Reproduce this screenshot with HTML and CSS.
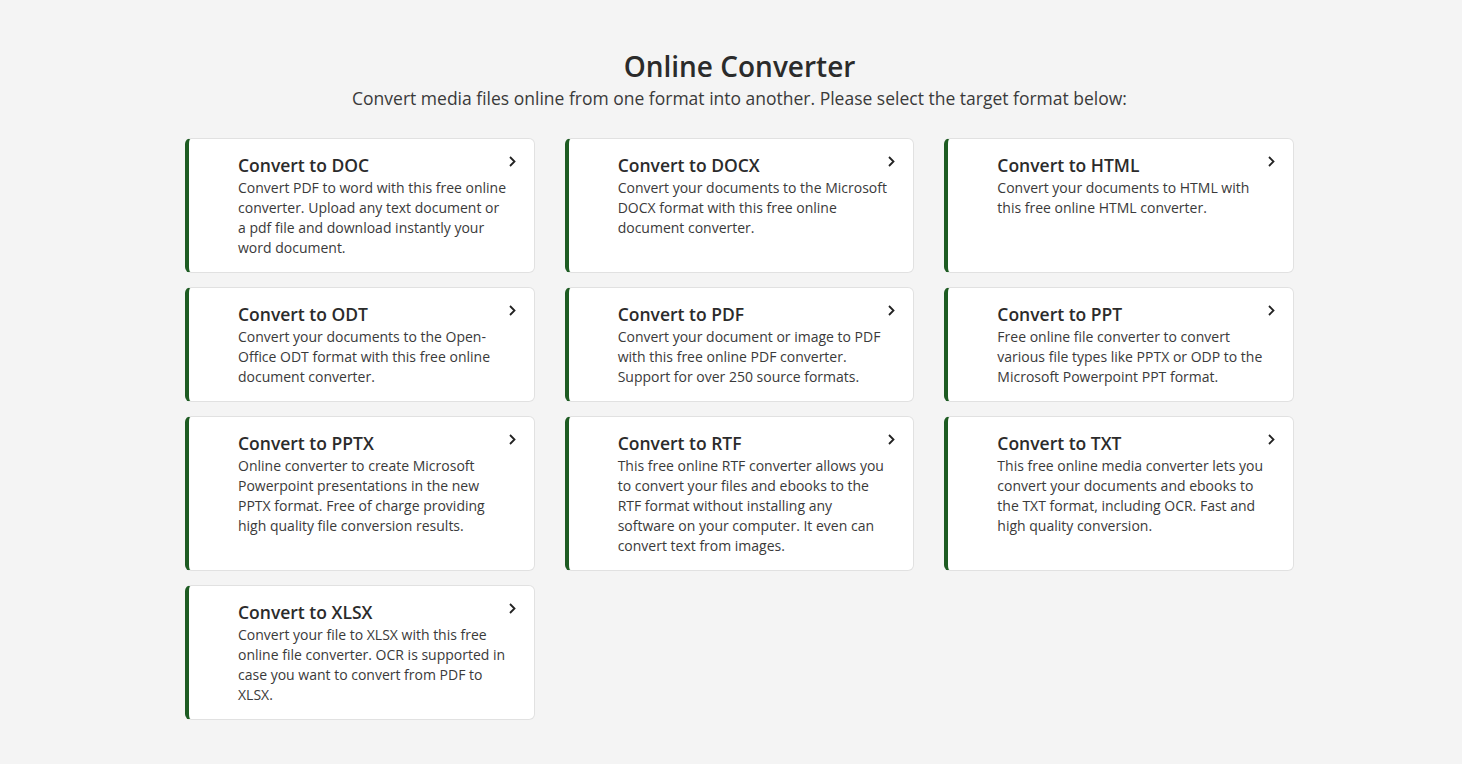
FILE: index.html
```html
<!DOCTYPE html>
<html lang="en">
<head>
  <meta charset="UTF-8" />
  <meta name="viewport" content="width=device-width, initial-scale=1.0"/>
  <title>Online Converter</title>
  <link rel="stylesheet" href="styles.css">
</head>
<body>

  <div class="wrap">
    <h1>Online Converter</h1>
    <p class="lead">Convert media files online from one format into another. Please select the target format below:</p>

    <div class="grid">
      <a class="card" href="#">
        <h3>Convert to DOC</h3>
        <p>Convert PDF to word with this free online converter. Upload any text document or a pdf file and download instantly your word document.</p>
        <svg class="chev" viewBox="0 0 7 11"><path d="M1 1l4.5 4.5L1 10"/></svg>
      </a>
      <a class="card" href="#">
        <h3>Convert to DOCX</h3>
        <p>Convert your documents to the Microsoft DOCX format with this free online document converter.</p>
        <svg class="chev" viewBox="0 0 7 11"><path d="M1 1l4.5 4.5L1 10"/></svg>
      </a>
      <a class="card" href="#">
        <h3>Convert to HTML</h3>
        <p>Convert your documents to HTML with this free online HTML converter.</p>
        <svg class="chev" viewBox="0 0 7 11"><path d="M1 1l4.5 4.5L1 10"/></svg>
      </a>
      <a class="card" href="#">
        <h3>Convert to ODT</h3>
        <p>Convert your documents to the Open-Office ODT format with this free online document converter.</p>
        <svg class="chev" viewBox="0 0 7 11"><path d="M1 1l4.5 4.5L1 10"/></svg>
      </a>
      <a class="card" href="#">
        <h3>Convert to PDF</h3>
        <p>Convert your document or image to PDF with this free online PDF converter. Support for over 250 source formats.</p>
        <svg class="chev" viewBox="0 0 7 11"><path d="M1 1l4.5 4.5L1 10"/></svg>
      </a>
      <a class="card" href="#">
        <h3>Convert to PPT</h3>
        <p>Free online file converter to convert various file types like PPTX or ODP to the Microsoft Powerpoint PPT format.</p>
        <svg class="chev" viewBox="0 0 7 11"><path d="M1 1l4.5 4.5L1 10"/></svg>
      </a>
      <a class="card" href="#">
        <h3>Convert to PPTX</h3>
        <p>Online converter to create Microsoft Powerpoint presentations in the new PPTX format. Free of charge providing high quality file conversion results.</p>
        <svg class="chev" viewBox="0 0 7 11"><path d="M1 1l4.5 4.5L1 10"/></svg>
      </a>
      <a class="card" href="#">
        <h3>Convert to RTF</h3>
        <p>This free online RTF converter allows you to convert your files and ebooks to the RTF format without installing any software on your computer. It even can convert text from images.</p>
        <svg class="chev" viewBox="0 0 7 11"><path d="M1 1l4.5 4.5L1 10"/></svg>
      </a>
      <a class="card" href="#">
        <h3>Convert to TXT</h3>
        <p>This free online media converter lets you convert your documents and ebooks to the TXT format, including OCR. Fast and high quality conversion.</p>
        <svg class="chev" viewBox="0 0 7 11"><path d="M1 1l4.5 4.5L1 10"/></svg>
      </a>
      <a class="card" href="#">
        <h3>Convert to XLSX</h3>
        <p>Convert your file to XLSX with this free online file converter. OCR is supported in case you want to convert from PDF to XLSX.</p>
        <svg class="chev" viewBox="0 0 7 11"><path d="M1 1l4.5 4.5L1 10"/></svg>
      </a>
    </div>
  </div>

</body>
</html>
```

FILE: styles.css
```css
body {
  margin: 0;
  font-family: 'Open Sans', 'Noto Sans', sans-serif;
  background-color: #f4f4f4;
  color: #333;
}

.wrap {
  width: 1109px;
  margin-left: 185px;
  padding-top: 46px;
}

h1 {
  margin: 0;
  text-align: center;
  font-size: 28px;
  font-weight: 600;
  line-height: 40px;
  color: #2b2b2b;
}

.lead {
  margin: 0;
  text-align: center;
  font-size: 17.5px;
  line-height: 24px;
  color: #3a3a3a;
}

.grid {
  display: grid;
  grid-template-columns: repeat(3, 1fr);
  column-gap: 30px;
  row-gap: 14px;
  margin-top: 28px;
}

.card {
  position: relative;
  display: block;
  background-color: #fff;
  border: 1px solid #e1e1e1;
  border-left: 4px solid #1d5b22;
  border-radius: 6px;
  padding: 15px 24px 14px 49px;
  text-decoration: none;
  color: #333;
}

.card h3 {
  margin: 0 0 2px;
  font-size: 17.5px;
  font-weight: 600;
  line-height: 22px;
  color: #2b2b2b;
}

.card p {
  margin: 0;
  font-size: 14px;
  line-height: 20px;
  color: #3a3a3a;
}

.chev {
  position: absolute;
  top: 17px;
  right: 18px;
  width: 7px;
  height: 11px;
  fill: none;
  stroke: #222;
  stroke-width: 1.8;
}
```
